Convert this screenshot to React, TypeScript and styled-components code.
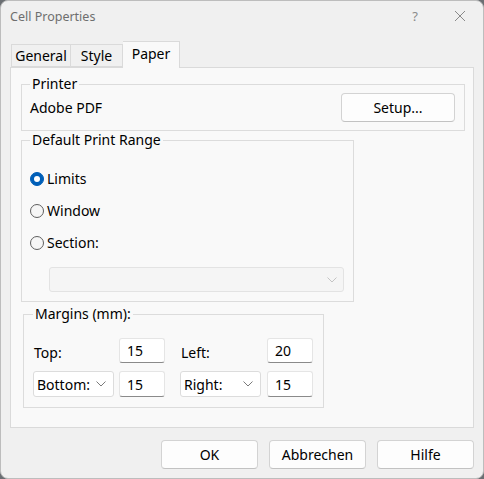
import styled, { createGlobalStyle } from "styled-components";

const GlobalStyle = createGlobalStyle`
  html, body {
    margin: 0;
    padding: 0;
    background: #6b6f73;
  }
  * {
    box-sizing: border-box;
  }
`;

const FONT = `"Noto Sans", "Open Sans", "DejaVu Sans", sans-serif`;

export default function App() {
  return (
    <>
      <GlobalStyle />
      <Window>
        <TitleBar>
          <Title>Cell Properties</Title>
          <TitleIcons>
            <HelpMark>?</HelpMark>
            <CloseIcon width="12" height="12" viewBox="0 0 12 12">
              <path d="M1 1 L11 11 M11 1 L1 11" stroke="#8a8a8a" strokeWidth="1" fill="none" />
            </CloseIcon>
          </TitleIcons>
        </TitleBar>

        <Body>
          <TabStrip>
            <Tab $w={60}>General</Tab>
            <Tab $w={52}>Style</Tab>
            <Tab $w={57} $active>Paper</Tab>
          </TabStrip>

          <Panel>
            <Group $w={444} $pb={8}>
              <Legend>Printer</Legend>
              <PrinterRow>
                <Text>Adobe PDF</Text>
                <Button $w={114} $h={29}>Setup...</Button>
              </PrinterRow>
            </Group>

            <Group $w={333} $pb={9}>
              <Legend>Default Print Range</Legend>
              <RadioList>
                <RadioRow>
                  <Radio $checked />
                  <Text>Limits</Text>
                </RadioRow>
                <RadioRow>
                  <Radio />
                  <Text>Window</Text>
                </RadioRow>
                <RadioRow>
                  <Radio />
                  <Text>Section:</Text>
                </RadioRow>
              </RadioList>
              <DisabledSelect>
                <Chevron color="#c4c4c4" />
              </DisabledSelect>
            </Group>

            <MarginGroup>
              <Legend>Margins (mm):</Legend>
              <MarginGrid>
                <FieldLabel>Top:</FieldLabel>
                <NumInput defaultValue="15" />
                <FieldLabel $indent>Left:</FieldLabel>
                <NumInput defaultValue="20" />
                <SideSelect>
                  <span>Bottom:</span>
                  <Chevron color="#7a7a7a" />
                </SideSelect>
                <NumInput defaultValue="15" />
                <SideSelect $indent>
                  <span>Right:</span>
                  <Chevron color="#7a7a7a" />
                </SideSelect>
                <NumInput defaultValue="15" />
              </MarginGrid>
            </MarginGroup>
          </Panel>

          <ButtonRow>
            <Button $w={97} $h={29}>OK</Button>
            <Button $w={97} $h={29}>Abbrechen</Button>
            <Button $w={97} $h={29}>Hilfe</Button>
          </ButtonRow>
        </Body>
      </Window>
    </>
  );
}

function Chevron({ color }: { color: string }) {
  return (
    <svg width="10" height="6" viewBox="0 0 10 6">
      <path d="M0.5 0.5 L5 5 L9.5 0.5" stroke={color} strokeWidth="1" fill="none" />
    </svg>
  );
}

const Window = styled.div`
  width: 484px;
  height: 479px;
  background: #f0f0f0;
  border: 1px solid #bdbdbd;
  border-radius: 8px;
  overflow: hidden;
  display: flex;
  flex-direction: column;
  font-family: ${FONT};
  color: #000;
`;

const TitleBar = styled.div`
  height: 30px;
  flex: none;
  display: flex;
  align-items: center;
  justify-content: space-between;
  padding: 0 17px 0 9px;
`;

const Title = styled.span`
  font-size: 12.5px;
  color: #6e6e6e;
`;

const TitleIcons = styled.div`
  display: flex;
  align-items: center;
  gap: 36px;
`;

const HelpMark = styled.span`
  font-size: 13px;
  color: #8a8a8a;
`;

const CloseIcon = styled.svg`
  display: block;
`;

const Body = styled.div`
  flex: 1;
  display: flex;
  flex-direction: column;
  padding: 0 10px 0 9px;
`;

const TabStrip = styled.div`
  height: 36px;
  display: flex;
  align-items: flex-end;
  padding-left: 1px;
  position: relative;
  z-index: 1;
`;

const Tab = styled.div<{ $w: number; $active?: boolean }>`
  width: ${(p) => p.$w}px;
  height: ${(p) => (p.$active ? 27 : 23)}px;
  margin-bottom: ${(p) => (p.$active ? -1 : 0)}px;
  display: flex;
  align-items: center;
  justify-content: center;
  padding-bottom: ${(p) => (p.$active ? 4 : 0)}px;
  font-size: 14px;
  background: ${(p) => (p.$active ? "#f9f9f9" : "#f0f0f0")};
  border: 1px solid #dadada;
  border-bottom: ${(p) => (p.$active ? "none" : "1px solid #dadada")};
  & + & {
    border-left: none;
  }
`;

const Panel = styled.div`
  width: 464px;
  height: 361px;
  background: #f9f9f9;
  border: 1px solid #dadada;
  padding: 7px 0 0 10px;
  display: flex;
  flex-direction: column;
  align-items: flex-start;
`;

const Group = styled.fieldset<{ $w: number; $pb?: number }>`
  width: ${(p) => p.$w}px;
  margin: 0;
  border: 1px solid #dcdcdc;
  padding: 0 9px ${(p) => p.$pb ?? 8}px 8px;
  min-width: 0;
`;

const MarginGroup = styled(Group).attrs({ $w: 301 })`
  margin: 3px 0 0 2px;
  padding: 15px 9px 10px 9px;
`;

const Legend = styled.legend`
  font-size: 14px;
  line-height: 18px;
  padding: 0 2px;
  margin-left: 0;
`;

const Text = styled.span`
  font-size: 14px;
  line-height: 20px;
`;

const PrinterRow = styled.div`
  display: flex;
  align-items: center;
  justify-content: space-between;
`;

const Button = styled.button<{ $w: number; $h: number }>`
  width: ${(p) => p.$w}px;
  height: ${(p) => p.$h}px;
  background: #fdfdfd;
  border: 1px solid #d3d3d3;
  border-bottom-color: #c2c2c2;
  border-radius: 4px;
  font-family: ${FONT};
  font-size: 14px;
  color: #000;
  padding: 0;
`;

const RadioList = styled.div`
  display: flex;
  flex-direction: column;
  gap: 12px;
  padding-top: 20px;
`;

const RadioRow = styled.div`
  display: flex;
  align-items: center;
  gap: 3px;
  height: 20px;
`;

const Radio = styled.span<{ $checked?: boolean }>`
  width: 14px;
  height: 14px;
  border-radius: 50%;
  flex: none;
  background: ${(p) => (p.$checked ? "#005fb8" : "#f6f6f6")};
  border: 1px solid ${(p) => (p.$checked ? "#005fb8" : "#5f5f5f")};
  display: flex;
  align-items: center;
  justify-content: center;
  &::after {
    content: "";
    display: ${(p) => (p.$checked ? "block" : "none")};
    width: 6px;
    height: 6px;
    border-radius: 50%;
    background: #fff;
  }
`;

const DisabledSelect = styled.div`
  margin: 14px 0 0 19px;
  width: 295px;
  height: 25px;
  background: #f5f5f5;
  border: 1px solid #e3e3e3;
  border-radius: 3px;
  display: flex;
  align-items: center;
  justify-content: flex-end;
  padding-right: 6px;
`;

const MarginGrid = styled.div`
  display: grid;
  grid-template-columns: 81px 46px 91px 47px;
  grid-template-rows: 25px 26px;
  column-gap: 5px;
  row-gap: 8px;
`;

const FieldLabel = styled.span<{ $indent?: boolean }>`
  font-size: 14px;
  display: flex;
  align-items: center;
  padding: 3px 0 0 ${(p) => (p.$indent ? 11 : 1)}px;
`;

const NumInput = styled.input`
  width: 46px;
  height: 100%;
  justify-self: end;
  background: #fff;
  border: 1px solid #e5e5e5;
  border-bottom: 1px solid #8a8a8a;
  border-radius: 3px;
  font-family: ${FONT};
  font-size: 14px;
  color: #000;
  padding: 0 0 0 7px;
  outline: none;
  &:nth-child(2),
  &:nth-child(6) {
    justify-self: start;
  }
`;

const SideSelect = styled.div<{ $indent?: boolean }>`
  height: 100%;
  width: 81px;
  margin-left: ${(p) => (p.$indent ? 10 : 0)}px;
  background: #fff;
  border: 1px solid #dcdcdc;
  border-radius: 3px;
  display: flex;
  align-items: center;
  justify-content: space-between;
  padding: 0 7px 0 3px;
  font-size: 14px;
`;

const ButtonRow = styled.div`
  display: flex;
  justify-content: flex-end;
  gap: 11px;
  padding-top: 12px;
  margin-right: -1px;
`;
